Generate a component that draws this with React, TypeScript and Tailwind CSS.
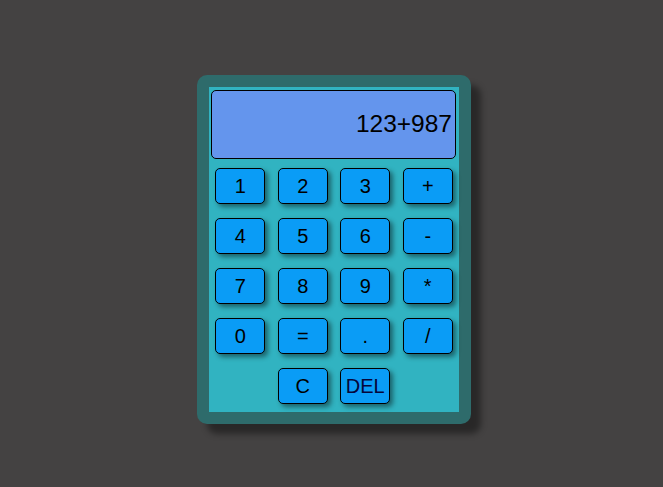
import React from "react";

const rows: string[][] = [
  ["1", "2", "3", "+"],
  ["4", "5", "6", "-"],
  ["7", "8", "9", "*"],
  ["0", "=", ".", "/"],
];

function Key({ label, className = "", textClass = "text-black" }: { label: string; className?: string; textClass?: string }) {
  return (
    <div className={`flex items-center justify-center ${className}`}>
      <button className={`w-[50px] h-[36px] rounded-[5px] border border-black bg-[#0a9cf6] text-[20px] leading-none shadow-[3px_3px_5px_rgba(0,0,0,0.45)] [font-family:'Liberation_Sans',Arial,sans-serif] ${textClass}`}>
        {label}
      </button>
    </div>
  );
}

export default function App() {
  return (
    <div className="w-[663px] h-[487px] bg-[#444242] flex justify-center items-start pt-[75px] [font-family:'Liberation_Sans',Arial,sans-serif]">
      <div className="ml-[5px] w-[274px] h-[349px] rounded-[10px] bg-[#2e6b6b] p-[12px] shadow-[10px_10px_6px_rgba(0,0,0,0.4)]">
        <div className="w-[250px] h-[325px] bg-[#31b3c1] flex flex-col">
          <div className="mt-[3px] ml-[2px] w-[245px] h-[69px] rounded-[5px] border border-black bg-[#6495ed] flex items-center justify-end pr-[3px] text-[24.5px] text-black">
            123+987
          </div>
          <div className="mt-[2px] grid grid-cols-4 auto-rows-[50px]">
            {rows.flat().map((k) => (
              <Key key={k} label={k} />
            ))}
            <Key label="C" className="col-start-2" />
            <Key label="DEL" textClass="text-[#06063a]" />
          </div>
        </div>
      </div>
    </div>
  );
}
